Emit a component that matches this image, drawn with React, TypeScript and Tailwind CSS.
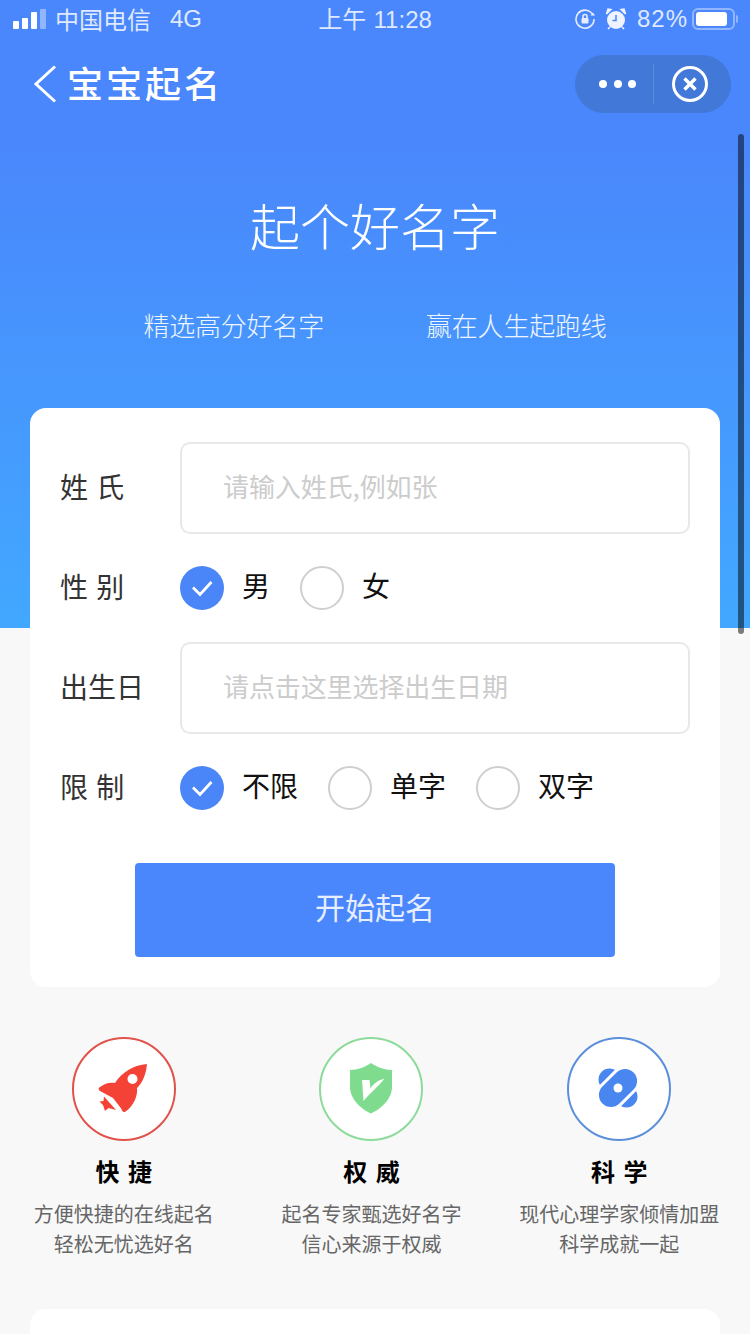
import React from 'react';

const CJK = "font-['Noto_Sans_CJK_SC','Noto_Sans',sans-serif]";

const Radio = ({ checked }: { checked?: boolean }) =>
  checked ? (
    <span className="flex h-11 w-11 shrink-0 items-center justify-center rounded-full bg-[#4a86f8]">
      <svg width="22" height="18" viewBox="0 0 22 18" fill="none" stroke="#fff" strokeWidth="2.7">
        <path d="M2 8.5l7 7L20.5 3" />
      </svg>
    </span>
  ) : (
    <span className="h-11 w-11 shrink-0 rounded-full border-2 border-[#cfcfcf] bg-white" />
  );

const Option = ({ label, checked }: { label: string; checked?: boolean }) => (
  <div className="flex items-center gap-[18px]">
    <Radio checked={checked} />
    <span className="-mt-[6px] text-[28px] leading-none text-[#111]">{label}</span>
  </div>
);

const Row = ({ label, children, className }: { label: string; children: React.ReactNode; className: string }) => (
  <div className={`flex items-center ${className}`}>
    <span className="w-[120px] shrink-0 pb-1 text-[28px] leading-none text-[#333] [word-spacing:2px]">{label}</span>
    {children}
  </div>
);

const Field = ({ placeholder }: { placeholder: string }) => (
  <input
    readOnly
    placeholder={placeholder}
    className="h-[92px] w-[510px] rounded-[10px] border-2 border-[#e8e8e8] bg-white pb-[6px] pl-[41px] text-[26px] tracking-[-0.1px] outline-none placeholder:text-[#cccccc]"
  />
);

const Rocket = () => (
  <svg width="100" height="100" viewBox="0 0 104 104" className="h-full w-full">
    <path fill="#f44336" d="M75 27C74 37 71 45 65 51 66 58 62 69 53 75 51 75.5 50 74 49.5 72L41 61 28 54C26 52.5 26.5 50.5 28 50 33 46 38 45 43 46 50 35 62 28 75 27Z" />
    <circle cx="60.5" cy="42" r="5" fill="#fff" />
    <path fill="#f44336" d="M32 59.5L36 64 44 73 36.5 71 33 74 31 68 27.5 64.5 31.5 64Z" />
  </svg>
);

const Shield = () => (
  <svg width="100" height="100" viewBox="0 0 104 104" className="h-full w-full">
    <path fill="#7fdc8f" d="M52 26C58 30 65 33 73 33L73 50C73 62 62 72 52 76.5 42 72 31 62 31 50L31 33C39 33 46 30 52 26Z" />
    <path fill="#fff" d="M43 43L50.5 43 51.5 51.5C55 46 60 43 65.5 41.5 60 49 52 55 44.5 64Z" />
  </svg>
);

const Atom = () => (
  <svg width="100" height="100" viewBox="0 0 104 104" className="h-full w-full">
    <rect x="28" y="40" width="46" height="22" rx="11" fill="#4a86f0" transform="rotate(45 51 51)" />
    <rect x="26" y="36" width="50" height="30" rx="15" fill="#fff" transform="rotate(-45 51 51)" />
    <rect x="29" y="39" width="44" height="24" rx="12" fill="#4a86f0" transform="rotate(-45 51 51)" />
    <circle cx="51" cy="51" r="4.5" fill="#fff" />
  </svg>
);

const features = [
  { title: '快 捷', lines: ['方便快捷的在线起名', '轻松无忧选好名'], ring: 'border-[#e0524a]', icon: <Rocket /> },
  { title: '权 威', lines: ['起名专家甄选好名字', '信心来源于权威'], ring: 'border-[#8ddb9a]', icon: <Shield /> },
  { title: '科 学', lines: ['现代心理学家倾情加盟', '科学成就一起'], ring: 'border-[#5b8fdc]', icon: <Atom /> },
];

export default function App() {
  return (
    <div className={`relative h-[1334px] w-[750px] overflow-hidden bg-[#f8f8f8] ${CJK}`}>
      <div className="h-[628px] bg-[linear-gradient(180deg,#4a86fc_0%,#4a86fc_21%,#42a8ff_100%)] text-white">
        {/* status bar */}
        <div className="relative flex h-[40px] items-center pb-[2px] pl-[13px] pr-[12px] text-[24px] text-[#dfe9ff]">
          <div className="flex items-end gap-[3px]">
            <span className="h-[8px] w-[6px] rounded-[1px] bg-white" />
            <span className="h-[11px] w-[6px] rounded-[1px] bg-white" />
            <span className="h-[17px] w-[6px] rounded-[1px] bg-white" />
            <span className="h-[20px] w-[6px] rounded-[1px] bg-white/40" />
          </div>
          <span className="ml-[9px]">中国电信</span>
          <span className="ml-[19px] font-['Liberation_Sans',sans-serif]">4G</span>
          <span className="absolute left-0 right-0 text-center [word-spacing:2px]">上午 <span className="font-['Liberation_Sans',sans-serif]">11:28</span></span>
          <div className="ml-auto flex items-center">
            <svg width="22" height="22" viewBox="0 0 22 22" fill="none" stroke="#e6eeff" strokeWidth="1.6">
              <path d="M19 7A9 9 0 1 0 20 11" />
              <path d="M16.5 7.5h4.5l-2-3z" fill="#e6eeff" stroke="none" />
              <rect x="7.5" y="10" width="7" height="5.5" rx="1" fill="#e6eeff" stroke="none" />
              <path d="M9 10V8.5a2 2 0 0 1 4 0V10" />
            </svg>
            <svg className="ml-[9px]" width="22" height="22" viewBox="0 0 22 22">
              <circle cx="11" cy="12" r="9" fill="#eef3ff" />
              <path d="M11 7v5.5H7.5" fill="none" stroke="#4a86fc" strokeWidth="1.5" />
              <path d="M1.5 6L6 1.5 3 1zM20.5 6L16 1.5 19 1z" fill="#eef3ff" stroke="#eef3ff" strokeWidth="1.5" />
              <path d="M5 19l-2 2M17 19l2 2" stroke="#eef3ff" strokeWidth="1.6" />
            </svg>
            <span className="ml-[10px] font-['Liberation_Sans',sans-serif] text-[24px] tracking-[1px]">82%</span>
            <div className="ml-[4px] flex h-[22px] w-[43px] items-center rounded-[6px] border-2 border-white/40 p-[2px]">
              <span className="h-full w-[31px] rounded-[3px] bg-white" />
            </div>
            <span className="ml-[1px] h-[8px] w-[2px] rounded-r bg-white/40" />
          </div>
        </div>

        {/* nav bar */}
        <div className="flex h-[88px] items-center justify-between pl-[33px] pr-[19px]">
          <div className="flex items-center">
            <svg width="24" height="38" viewBox="0 0 24 38" fill="none" stroke="#fff" strokeWidth="3">
              <path d="M22 1.5L3 19l19 17.5" />
            </svg>
            <span className="-mt-1 ml-[10px] text-[36px] font-medium leading-none tracking-[3px]">宝宝起名</span>
          </div>
          <div className="flex h-[58px] w-[156px] items-center rounded-full bg-[#4278d8]">
            <div className="flex w-[78px] gap-[6.5px] pl-[24px]">
              <span className="h-2 w-2 rounded-full bg-white" />
              <span className="h-2 w-2 rounded-full bg-white" />
              <span className="h-2 w-2 rounded-full bg-white" />
            </div>
            <span className="h-[40px] w-px bg-white/15" />
            <div className="flex flex-1 justify-center pr-[6px]">
              <svg width="38" height="38" viewBox="0 0 38 38" fill="none" stroke="#fff">
                <circle cx="19" cy="19" r="16.5" strokeWidth="3" />
                <path d="M13.5 13.5l11 11M24.5 13.5l-11 11" strokeWidth="3.4" />
              </svg>
            </div>
          </div>
        </div>

        {/* hero */}
        <h1 className="mt-[64px] text-center text-[50px] font-light leading-[64px]">起个好名字</h1>
        <div className="mt-[49px] flex justify-center gap-[102px] text-[26px] font-light leading-[40px] tracking-[-0.2px] text-[#eef5ff]">
          <span>精选高分好名字</span>
          <span>赢在人生起跑线</span>
        </div>
      </div>

      {/* form card */}
      <div className="relative mx-[30px] -mt-[220px] h-[579px] rounded-[16px] bg-white pl-[30px] pt-[34px]">
        <Row label="姓 氏" className="">
          <Field placeholder="请输入姓氏,例如张" />
        </Row>
        <Row label="性 别" className="mt-[32px]">
          <div className="flex gap-[30px]">
            <Option label="男" checked />
            <Option label="女" />
          </div>
        </Row>
        <Row label="出生日" className="mt-[32px]">
          <Field placeholder="请点击这里选择出生日期" />
        </Row>
        <Row label="限 制" className="mt-[32px]">
          <div className="flex gap-[30px]">
            <Option label="不限" checked />
            <Option label="单字" />
            <Option label="双字" />
          </div>
        </Row>
        <button className="ml-[75px] mt-[53px] flex h-[94px] w-[480px] items-center justify-center rounded-[4px] bg-[#4a86fc] pb-2 text-[30px] text-[#e6eeff]">
          开始起名
        </button>
      </div>

      {/* features */}
      <div className="mt-[50px] grid w-[743px] grid-cols-3">
        {features.map((f) => (
          <div key={f.title} className="flex flex-col items-center">
            <div className={`h-[104px] w-[104px] rounded-full border-2 bg-white ${f.ring}`}>
              <div className="-m-[2px] h-[104px] w-[104px]">{f.icon}</div>
            </div>
            <h3 className="mt-[14px] text-[24px] font-bold leading-[32px] text-black [word-spacing:3px]">{f.title}</h3>
            <p className="mt-[12px] text-center text-[20px] leading-[30px] text-[#666]">
              {f.lines[0]}
              <br />
              {f.lines[1]}
            </p>
          </div>
        ))}
      </div>

      {/* next card, cut off by the viewport */}
      <div className="mx-[30px] mt-[50px] h-[60px] rounded-[16px] bg-white" />

      {/* scrollbar */}
      <div className="absolute right-[6px] top-[134px] h-[500px] w-[6px] rounded-full bg-black/50" />
    </div>
  );
}
